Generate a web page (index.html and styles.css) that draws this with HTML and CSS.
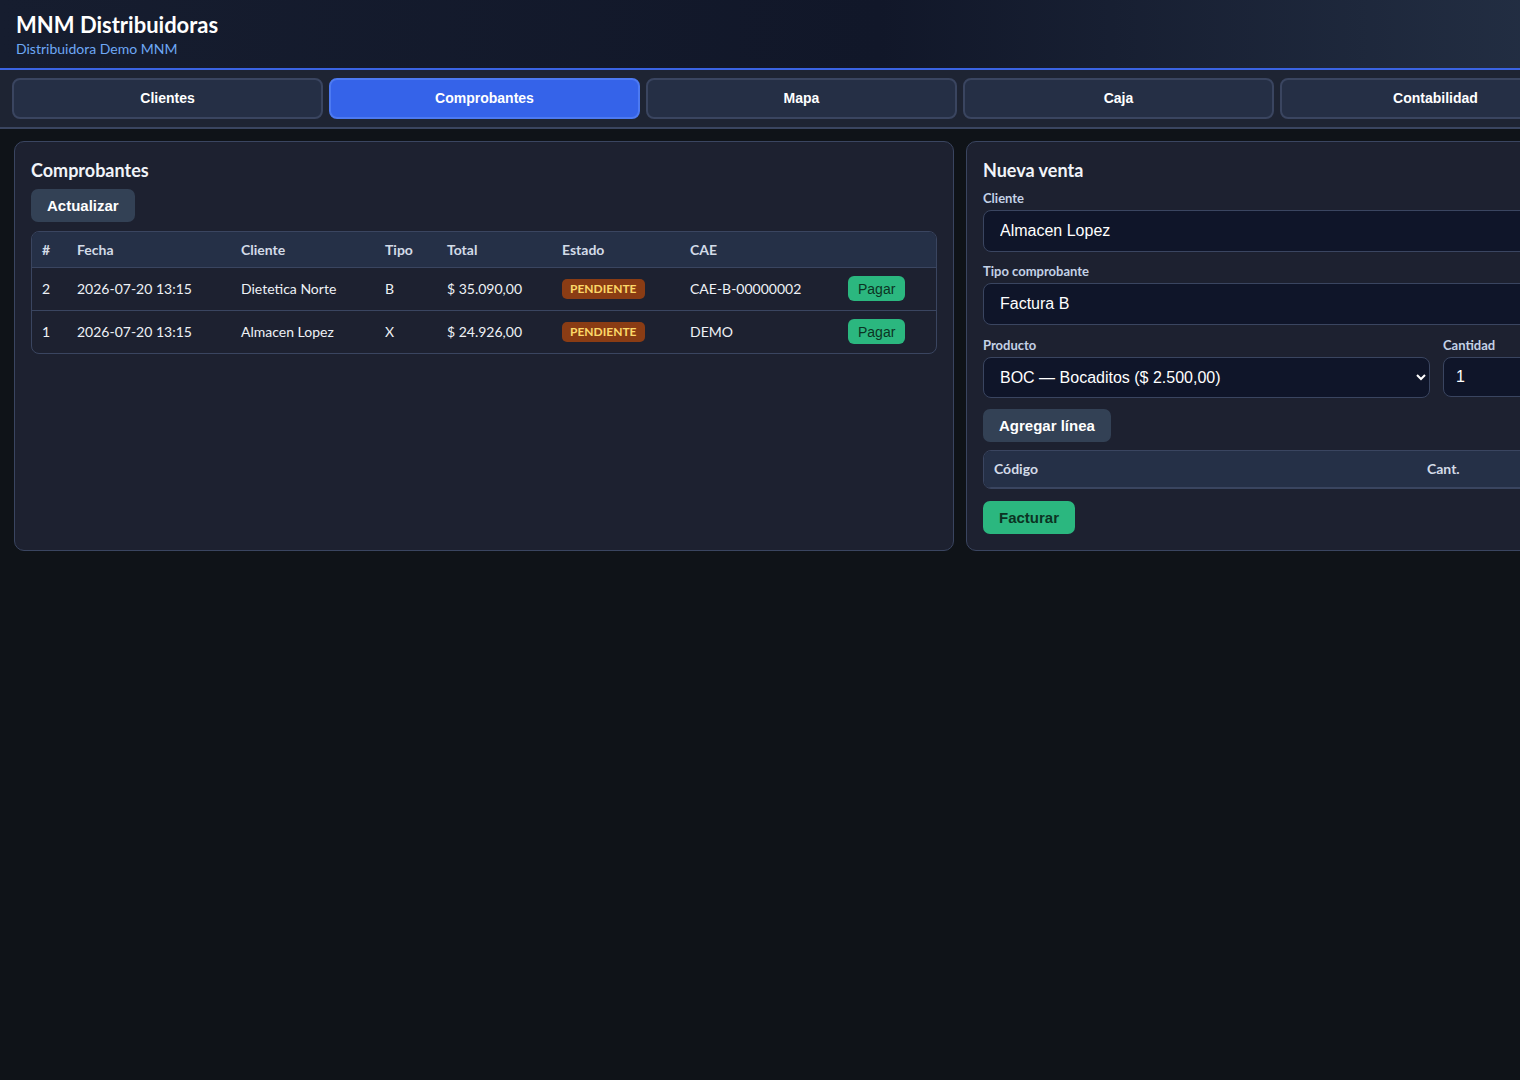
FILE: index.html
```html
<!DOCTYPE html>
<html lang="es">
<head>
  <meta charset="UTF-8">
  <meta name="viewport" content="width=device-width, initial-scale=1.0">
  <title>MNM Distribuidoras</title>
  <link rel="stylesheet" href="styles.css">
</head>
<body>
  <header class="topbar">
    <h1>MNM Distribuidoras</h1>
    <div class="subtitle">Distribuidora Demo MNM</div>
  </header>

  <nav class="tabs">
    <button class="tab">Clientes</button>
    <button class="tab active">Comprobantes</button>
    <button class="tab">Mapa</button>
    <button class="tab">Caja</button>
    <button class="tab">Contabilidad</button>
  </nav>

  <main class="layout">
    <section class="panel">
      <h2>Comprobantes</h2>
      <button class="btn btn-gray">Actualizar</button>
      <div class="table-wrap">
        <table class="grid">
          <thead>
            <tr>
              <th class="c-num">#</th>
              <th class="c-fecha">Fecha</th>
              <th class="c-cliente">Cliente</th>
              <th class="c-tipo">Tipo</th>
              <th class="c-total">Total</th>
              <th class="c-estado">Estado</th>
              <th class="c-cae">CAE</th>
              <th></th>
            </tr>
          </thead>
          <tbody>
            <tr>
              <td>2</td>
              <td>2026-07-20 13:15</td>
              <td>Dietetica Norte</td>
              <td>B</td>
              <td>$ 35.090,00</td>
              <td><span class="badge">PENDIENTE</span></td>
              <td>CAE-B-00000002</td>
              <td><button class="btn-pay">Pagar</button></td>
            </tr>
            <tr>
              <td>1</td>
              <td>2026-07-20 13:15</td>
              <td>Almacen Lopez</td>
              <td>X</td>
              <td>$ 24.926,00</td>
              <td><span class="badge">PENDIENTE</span></td>
              <td>DEMO</td>
              <td><button class="btn-pay">Pagar</button></td>
            </tr>
          </tbody>
        </table>
      </div>
    </section>

    <section class="panel panel-side">
      <h2>Nueva venta</h2>
      <label class="field-label">Cliente</label>
      <input class="field" type="text" value="Almacen Lopez">
      <label class="field-label">Tipo comprobante</label>
      <input class="field" type="text" value="Factura B">

      <div class="product-row">
        <div>
          <label class="field-label">Producto</label>
          <select class="field">
            <option>BOC — Bocaditos ($ 2.500,00)</option>
          </select>
        </div>
        <div>
          <label class="field-label">Cantidad</label>
          <input class="field" type="number" value="1">
        </div>
      </div>

      <button class="btn btn-gray">Agregar línea</button>

      <div class="table-wrap lines">
        <table class="grid fixed">
          <thead>
            <tr>
              <th class="c-codigo">Código</th>
              <th>Cant.</th>
            </tr>
          </thead>
        </table>
      </div>

      <button class="btn btn-green">Facturar</button>
    </section>
  </main>
</body>
</html>
```

FILE: styles.css
```css
* {
  margin: 0;
  padding: 0;
  box-sizing: border-box;
}

body {
  font-family: Lato, 'Noto Sans', sans-serif;
  background: #0f1318;
  color: #e5e9f0;
  min-width: 1600px;
  overflow-x: hidden;
}

.topbar {
  height: 70px;
  padding: 12px 16px 0;
  background: linear-gradient(90deg, #161d2f, #111729 55%, #243045);
  border-bottom: 2px solid #3b64e3;
}

.topbar h1 {
  font-size: 22px;
  font-weight: 700;
  line-height: 26px;
  color: #fff;
}

.subtitle {
  margin-top: 2px;
  font-size: 14px;
  line-height: 18px;
  color: #6ea8f5;
}

.tabs {
  display: flex;
  gap: 6px;
  padding: 8px 12px 8px;
  background: #1e2433;
  border-bottom: 2px solid #3a4560;
}

.tabs .tab {
  flex: 0 0 311px;
  height: 41px;
  padding-bottom: 2px;
  background: #252f45;
  border: 2px solid #3a4560;
  border-radius: 8px;
  color: #fff;
  font-family: 'Liberation Sans', Arial, sans-serif;
  font-size: 14px;
  font-weight: 700;
}

.tabs .tab.active {
  background: #3563e9;
  border-color: #4d7af2;
}

.layout {
  display: grid;
  grid-template-columns: 940px 634px;
  gap: 12px;
  padding: 12px 14px;
  align-items: stretch;
}

.panel {
  background: #1d2130;
  border: 1px solid #3a4560;
  border-radius: 10px;
  padding: 16px 16px 16px;
}

.panel h2 {
  font-size: 18px;
  font-weight: 700;
  line-height: 24px;
  color: #f1f4f9;
  margin-bottom: 7px;
}

.panel-side h2 {
  margin-bottom: 0;
}

.btn {
  display: inline-block;
  height: 33px;
  padding: 0 16px;
  border: none;
  border-radius: 7px;
  font-family: 'Liberation Sans', Arial, sans-serif;
  font-size: 15px;
  font-weight: 700;
}

.btn-gray {
  background: #334155;
  color: #fff;
}

.btn-green {
  background: #2bb77f;
  color: #0b3323;
}

.table-wrap {
  margin-top: 9px;
  border: 1px solid #3a4560;
  border-radius: 8px;
  overflow: hidden;
}

.grid {
  width: 100%;
  border-collapse: collapse;
  font-size: 14px;
  text-align: left;
}

.grid.fixed {
  table-layout: fixed;
}

.grid th {
  background: #253047;
  color: #d3dbe7;
  font-weight: 700;
  height: 35px;
  padding: 0 10px;
  border-bottom: 1px solid #3a4560;
}

.grid td {
  height: 43px;
  padding: 0 10px;
  color: #eef1f6;
  border-bottom: 1px solid #3a4560;
}

.grid tbody tr:last-child td {
  border-bottom: none;
}

.c-num { width: 35px; }
.c-fecha { width: 164px; }
.c-cliente { width: 144px; }
.c-tipo { width: 62px; }
.c-total { width: 115px; }
.c-estado { width: 128px; }
.c-cae { width: 158px; }

.badge {
  display: inline-block;
  padding: 3px 8px;
  background: #8a3c14;
  color: #fcd868;
  border-radius: 5px;
  font-size: 12px;
  font-weight: 700;
  line-height: 14px;
}

.btn-pay {
  height: 25px;
  padding: 0 10px;
  background: #2bb77f;
  color: #0b3323;
  border: none;
  border-radius: 6px;
  font-family: 'Liberation Sans', Arial, sans-serif;
  font-size: 14px;
}

.field-label {
  display: block;
  margin-top: 8px;
  margin-bottom: 4px;
  font-size: 13px;
  font-weight: 700;
  line-height: 16px;
  color: #c4d1e6;
}

.field {
  display: block;
  width: 100%;
  height: 42px;
  padding: 0 16px;
  background: #0f1529;
  border: 1px solid #3a4560;
  border-radius: 8px;
  color: #fff;
  font-family: 'Liberation Sans', Arial, sans-serif;
  font-size: 16px;
}

.field + .field-label {
  margin-top: 11px;
}

.product-row {
  display: grid;
  grid-template-columns: 447px 1fr;
  gap: 13px;
  margin-top: 4px;
}

.product-row select.field {
  height: 41px;
  padding-left: 12px;
}

.product-row input.field {
  height: 40px;
  padding-left: 12px;
}

.product-row + .btn {
  margin-top: 11px;
}

.lines {
  margin-top: 8px;
  margin-bottom: 12px;
}

.lines .grid th {
  height: 36px;
}

.c-codigo { width: 433px; }
```
